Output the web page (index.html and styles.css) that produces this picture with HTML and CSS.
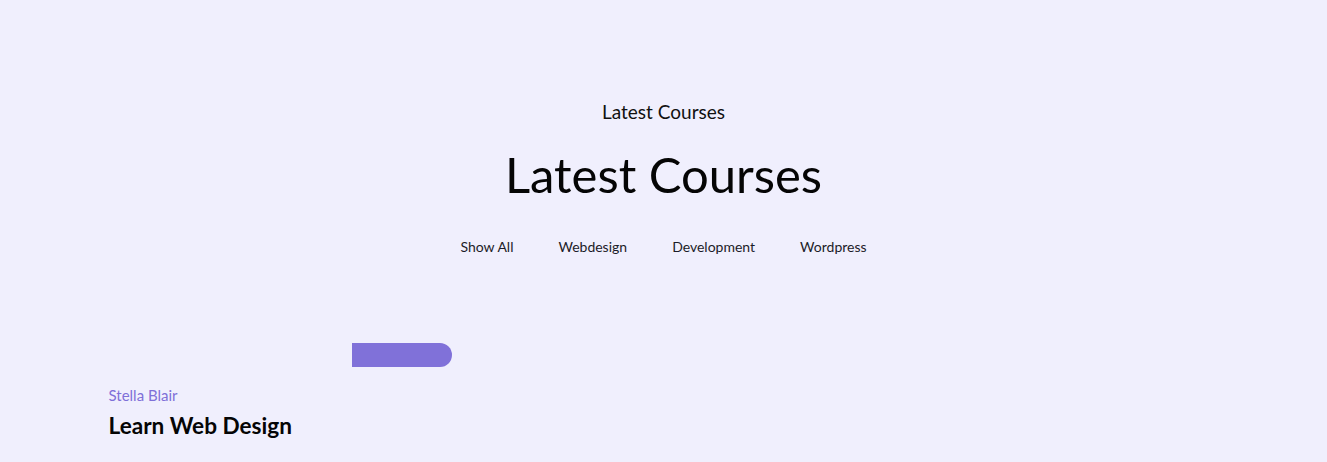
FILE: index.html
```html
<!DOCTYPE html>
<html lang="en">
<head>
<meta charset="utf-8">
<title>Latest Courses</title>
<link rel="stylesheet" href="styles.css">
</head>
<body>
<section class="courses">
  <div class="head">
    <p class="sub">Latest Courses</p>
    <h2 class="title">Latest Courses</h2>
    <ul class="filters">
      <li>Show All</li>
      <li>Webdesign</li>
      <li>Development</li>
      <li>Wordpress</li>
    </ul>
  </div>
  <div class="grid">
    <article class="card">
      <div class="thumb"><span class="badge"></span></div>
      <div class="body">
        <p class="author">Stella Blair</p>
        <h3 class="name">Learn Web Design</h3>
      </div>
    </article>
  </div>
</section>
</body>
</html>
```
FILE: styles.css
```css
* { box-sizing: border-box; }
html, body { margin: 0; padding: 0; }
body {
  background: #f0effd;
  font-family: Lato, "Open Sans", sans-serif;
  color: #000;
  height: 462px;
  overflow: hidden;
}
.courses { padding-top: 99px; }
.head { text-align: center; }
.sub {
  margin: 0;
  font-size: 19px;
  line-height: 26px;
  color: #111;
}
.title {
  margin: 16px 0 0;
  font-weight: 400;
  font-size: 49px;
  line-height: 67px;
  color: #050505;
}
.filters {
  list-style: none;
  margin: 28px 0 0;
  padding: 0;
  display: flex;
  justify-content: center;
  gap: 45px;
  font-size: 14px;
  line-height: 22px;
  color: #1c1c28;
}
.grid {
  width: 1140px;
  margin: 85px auto 0;
  display: grid;
  grid-template-columns: repeat(3, 1fr);
  gap: 30px;
}
.card { padding-left: 15px; }
.thumb {
  height: 24px;
  display: flex;
  justify-content: flex-end;
  width: 343px;
}
.badge {
  width: 100px;
  height: 24px;
  background: #8071d9;
  border-radius: 0 12px 12px 0;
}
.body { padding-top: 17px; }
.author {
  margin: 0;
  font-size: 15px;
  line-height: 22px;
  color: #7f70d8;
}
.name {
  margin: 6px 0 0;
  font-size: 22.6px;
  line-height: 28px;
  font-weight: 700;
  color: #050505;
}
```
